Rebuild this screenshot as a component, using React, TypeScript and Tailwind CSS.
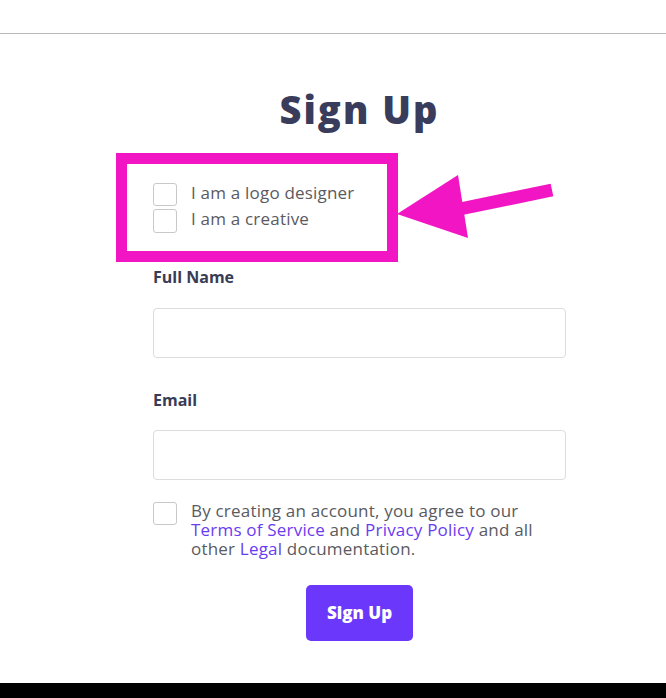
export default function App() {
  return (
    <div className="relative w-[666px] h-[698px] bg-white overflow-hidden font-['Open_Sans','Liberation_Sans',sans-serif]">
      <div className="h-[34px] border-b border-[#b6babd]" />

      <div className="flex justify-center pl-[53px]">
        <form className="w-[413px] flex flex-col">
          <h1 className="mt-[51px] text-center text-[38px] leading-[48px] font-extrabold text-[#393c5a] tracking-[2px]">
            Sign Up
          </h1>

          <div className="mt-[50px] flex flex-col gap-[3px] tracking-[0.2px]">
            <label className="flex items-center gap-[14px] h-[23px]">
              <span className="w-[24px] h-[23px] rounded-[3px] border border-[#c9c9c9] bg-white shrink-0" />
              <span className="mb-[4px] text-[17px] leading-[22px] text-[#5a5a5f]">I am a logo designer</span>
            </label>
            <label className="flex items-center gap-[14px] h-[23px]">
              <span className="w-[24px] h-[24px] rounded-[3px] border border-[#c9c9c9] bg-white shrink-0" />
              <span className="mb-[4px] text-[17px] leading-[22px] text-[#5a5a5f]">I am a creative</span>
            </label>
          </div>

          <label className="mt-[35px] text-[16px] leading-[20px] font-bold text-[#393c55]">Full Name</label>
          <input className="mt-[21px] h-[50px] w-full rounded-[4px] border border-[#dcdcdc] bg-white" />

          <label className="mt-[32px] text-[16px] leading-[20px] font-bold text-[#393c55]">Email</label>
          <input className="mt-[20px] h-[50px] w-full rounded-[4px] border border-[#dcdcdc] bg-white" />

          <div className="mt-[21px] flex items-start gap-[14px]">
            <span className="mt-[1px] w-[24px] h-[23px] rounded-[3px] border border-[#c9c9c9] bg-white shrink-0" />
            <p className="text-[17px] leading-[19px] tracking-[0.2px] text-[#5a5a5f]">
              By creating an account, you agree to our{' '}
              <a className="text-[#6a3bef]">Terms of Service</a> and{' '}
              <a className="text-[#6a3bef]">Privacy Policy</a> and all other{' '}
              <a className="text-[#6a3bef]">Legal</a> documentation.
            </p>
          </div>

          <div className="mt-[27px] flex justify-center">
            <button
              type="button"
              className="w-[107px] h-[56px] rounded-[5px] bg-[#6b38fb] text-white text-[17px] font-extrabold"
            >
              Sign Up
            </button>
          </div>
        </form>
      </div>

      <div className="absolute left-0 right-0 bottom-0 h-[15px] bg-black" />

      <svg className="absolute left-0 top-0 pointer-events-none" width="666" height="698" viewBox="0 0 666 698">
        <rect x="121.5" y="158.5" width="271" height="98" fill="none" stroke="#f215c3" strokeWidth="11" />
        <line x1="552" y1="190" x2="455" y2="210" stroke="#f215c3" strokeWidth="13" />
        <polygon points="397,214 458,175 468,238" fill="#f215c3" />
      </svg>
    </div>
  );
}
